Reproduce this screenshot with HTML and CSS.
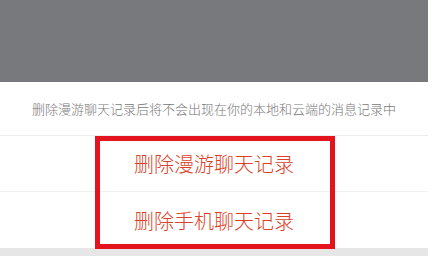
FILE: index.html
```html
<!DOCTYPE html>
<html lang="zh-CN">
<head>
<meta charset="utf-8">
<link rel="stylesheet" href="styles.css">
</head>
<body>
<div class="sheet">
  <div class="mask"></div>
  <div class="hint">删除漫游聊天记录后将不会出现在你的本地和云端的消息记录中</div>
  <div class="action">删除漫游聊天记录</div>
  <div class="action action-last">删除手机聊天记录</div>
  <div class="footer"></div>
  <div class="highlight"></div>
</div>
</body>
</html>
```
FILE: styles.css
```css
html, body {
  margin: 0;
  padding: 0;
  background: #ffffff;
}
body {
  width: 444px;
  height: 256px;
  overflow: hidden;
  font-family: "Noto Sans CJK SC", "Noto Sans", sans-serif;
}
.sheet {
  position: relative;
  width: 428px;
  display: flex;
  flex-direction: column;
}
.mask {
  height: 82px;
  background: #78797c;
}
.hint {
  height: 53px;
  display: flex;
  align-items: center;
  justify-content: center;
  font-size: 13px;
  font-weight: 300;
  color: #777777;
  border-bottom: 1px solid #eeeeee;
}
.action {
  height: 55px;
  display: flex;
  align-items: center;
  justify-content: center;
  font-size: 20px;
  font-weight: 300;
  color: #dc3f28;
  border-bottom: 1px solid #f0f0f0;
}
.action-last {
  height: 56px;
  border-bottom: none;
}
.footer {
  height: 20px;
  background: #e6e6e6;
}
.highlight {
  position: absolute;
  left: 95px;
  top: 136px;
  width: 230px;
  height: 103px;
  border: 5px solid #e3141d;
}
```
